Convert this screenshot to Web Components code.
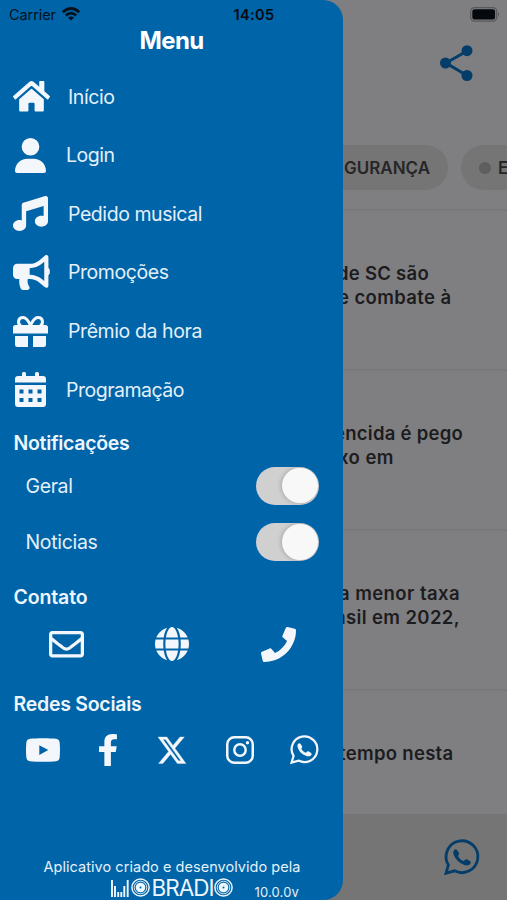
<!DOCTYPE html>
<html lang="pt-BR">
<head>
<meta charset="utf-8">
<title>Menu</title>
<style>
html,body{margin:0;height:900px;overflow:hidden}
body{font-family:Inter,"Liberation Sans",sans-serif;background:#7f7f81}
</style>
</head>
<body>
<radio-app></radio-app>
<script>
const define = (name, html, init) => {
  const t = document.createElement('template');
  t.innerHTML = html;
  customElements.define(name, class extends HTMLElement {
    constructor() {
      super();
      this.attachShadow({mode: 'open'}).append(t.content.cloneNode(true));
    }
    connectedCallback() { if (init) init(this, this.shadowRoot); }
  });
};

const handset = '<g fill="none" stroke="currentColor"><path stroke-width="2.8" stroke-linejoin="miter" d="M2 34.2 4.4 26A15.9 15.9 0 1 1 10.6 31.8Z"/></g><path fill="currentColor" d="M10.2 10.9C11 10 12.4 10 13 10.9L15 14.1C15.6 15.1 14.7 16 14 16.9 14.8 19.1 17 21.2 19.5 22.1L21.2 20.8C21.9 20.2 22.6 20.1 23.4 20.6L26.2 22.3C27.1 22.9 27 24.2 26.2 25 24.7 26.7 22.3 26.8 19.8 25.8 14.9 23.9 11.4 20.3 9.8 16 9 13.9 9.1 12.1 10.2 10.9Z"/>';

/* name: [viewBox, width, height, markup] */
const ICONS = {
  home: ['0 32 576 448', 37, 30.5, '<path d="M280.37 148.26L96 300.11V464a16 16 0 0 0 16 16l112.06-.29a16 16 0 0 0 15.92-16V368a16 16 0 0 1 16-16h64a16 16 0 0 1 16 16v95.64a16 16 0 0 0 16 16.05L464 480a16 16 0 0 0 16-16V300L295.67 148.26a12.19 12.19 0 0 0-15.3 0zM571.6 251.47L488 182.56V44.05a12 12 0 0 0-12-12h-56a12 12 0 0 0-12 12v72.61L318.47 43a48 48 0 0 0-61 0L4.34 251.47a12 12 0 0 0-1.6 16.9l25.5 31A12 12 0 0 0 45.15 301l235.22-193.74a12.19 12.19 0 0 1 15.3 0L530.9 301a12 12 0 0 0 16.9-1.6l25.5-31a12 12 0 0 0-1.7-16.93z"/>'],
  user: ['0 0 448 512', 31, 35, '<path d="M224 256A128 128 0 1 0 224 0a128 128 0 1 0 0 256zm-45.7 48C79.8 304 0 383.8 0 482.3C0 498.7 13.3 512 29.7 512H418.3c16.4 0 29.7-13.3 29.7-29.7C448 383.8 368.2 304 269.7 304H178.3z"/>'],
  music: ['0 0 512 512', 35, 35, '<path d="M499.1 6.3c8.1 6 12.9 15.6 12.9 25.7v72V368c0 44.2-43 80-96 80s-96-35.8-96-80s43-80 96-80c11.2 0 22 1.6 32 4.6V147L192 223.8V432c0 44.2-43 80-96 80s-96-35.8-96-80s43-80 96-80c11.2 0 22 1.6 32 4.6V200 128c0-14.1 9.3-26.6 22.8-30.7l320-96c9.7-2.9 20.2-1.1 28.3 5z"/>'],
  horn: ['0 0 576 512', 37.5, 35, '<path d="M544 184.880V32.01C544 23.26 537.02 0 512 0c-7.12 0-14.19 2.38-19.98 7.02l-85.03 68.03C364.28 109.19 310.66 128 256 128H64c-35.35 0-64 28.65-64 64v96c0 35.35 28.65 64 64 64h33.7c-1.39 10.48-2.18 21.14-2.18 32 0 39.77 9.26 77.35 25.56 110.94 5.19 10.69 16.52 17.06 28.4 17.06h74.28c26.05 0 41.69-29.84 25.9-50.56-16.4-21.52-26.15-48.36-26.15-77.44 0-11.11 1.62-21.79 4.41-32H256c54.66 0 108.28 18.81 150.98 52.95l85.03 68.03a32.023 32.023 0 0 0 19.98 7.02c24.92 0 32-22.78 32-32V295.13C560 284 566 263.63 566 240S560 196 544 184.880zM480 381.42l-33.05-26.44C392.95 311.78 325.12 288 256 288v-96c69.12 0 136.95-23.78 190.95-66.98L480 98.58v282.84z"/>'],
  gift: ['0 0 35 31', 35, 31, '<g fill="none" stroke="currentColor" stroke-width="3"><path d="M17.5 9.5C15 4 13 1.5 10 1.6 4.500 1.800 4.300 8.300 8 9.500M17.500 9.500C20 4 22 1.500 25 1.600 30.500 1.800 30.700 8.300 27 9.500"/></g><path d="M2.500 9H32.500Q35 9 35 11.500V17.500H0V11.500Q0 9 2.500 9ZM2 20H15V31H4.500Q2 31 2 28.500ZM20 20H33V28.500Q33 31 30.500 31H20Z"/>'],
  calendar: ['0 0 31 35', 31, 35, '<path fill-rule="evenodd" d="M7 4V1.500Q7 0 8.500 0H9.500Q11 0 11 1.500V4H20V1.500Q20 0 21.500 0H22.500Q24 0 24 1.500V4H28Q31 4 31 7V10.500H0V7Q0 4 3 4ZM0 13H31V32Q31 35 28 35H3Q0 35 0 32ZM4.500 17.500V21.500H8.500V17.500ZM13.500 17.500V21.500H17.500V17.500ZM22.500 17.500V21.500H26.500V17.500ZM4.500 26V30H8.500V26ZM13.500 26V30H17.500V26ZM22.500 26V30H26.500V26Z"/>'],
  mail: ['0 64 512 384', 35, 26.500, '<path d="M464 64H48C21.49 64 0 85.49 0 112v288c0 26.51 21.49 48 48 48h416c26.51 0 48-21.49 48-48V112c0-26.51-21.49-48-48-48zm0 48v40.805c-22.422 18.259-58.168 46.651-134.587 106.49-16.841 13.247-50.201 45.072-73.413 44.701-23.208.375-56.579-31.459-73.413-44.701C106.18 199.465 70.425 171.067 48 152.805V112h416zM48 400V214.398c22.914 18.251 55.409 43.862 104.938 82.646 21.857 17.205 60.134 55.186 103.062 54.955 42.717.231 80.509-37.199 103.053-54.947 49.528-38.783 82.032-64.401 104.947-82.653V400H48z"/>'],
  globe: ['0 8 496 496', 34, 34, '<path d="M336.5 160C322 70.7 287.8 8 248 8s-74 62.7-88.5 152h177zM152 256c0 22.2 1.2 43.5 3.3 64h185.3c2.1-20.5 3.3-41.8 3.3-64s-1.2-43.5-3.3-64H155.3c-2.1 20.5-3.3 41.8-3.3 64zm324.7-96c-28.6-67.9-86.5-120.4-158-141.6 24.4 33.8 41.2 84.7 50 141.6h108zM177.2 18.4C105.8 39.6 47.8 92.1 19.3 160h108c8.7-56.9 25.5-107.8 49.9-141.6zM487.4 192H372.7c2.1 21 3.3 42.5 3.3 64s-1.2 43-3.3 64h114.6c5.5-20.5 8.6-41.8 8.6-64s-3.1-43.5-8.5-64zM120 256c0-21.5 1.2-43 3.3-64H8.6C3.2 212.5 0 233.8 0 256s3.2 43.5 8.6 64h114.6c-2-21-3.2-42.5-3.2-64zm39.5 96c14.5 89.3 48.7 152 88.5 152s74-62.7 88.5-152h-177zm159.3 141.6c71.4-21.2 129.4-73.7 158-141.6h-108c-8.800 56.900-25.600 107.800-50 141.600zM19.300 352c28.600 67.900 86.500 120.400 158 141.600-24.400-33.800-41.200-84.700-50-141.600h-108z"/>'],
  phone: ['0 0 512 512', 35, 35, '<path d="M493.4 24.6l-104-24c-11.3-2.6-22.9 3.3-27.5 13.9l-48 112c-4.2 9.8-1.4 21.3 6.9 28l60.6 49.6c-36 76.7-98.9 140.5-177.2 177.2l-49.6-60.6c-6.8-8.3-18.2-11.1-28-6.9l-112 48C3.9 366.5-2 378.1.6 389.4l24 104C27.1 504.2 36.7 512 48 512c256.1 0 464-207.5 464-464 0-11.2-7.7-20.9-18.600-23.400z"/>'],
  youtube: ['0 0 34 24', 34, 24, '<path fill-rule="evenodd" d="M4 .8C10 0 24 0 30 .8 32.500 1.200 33.500 2.500 33.700 5 34.100 10 34.100 14 33.700 19 33.500 21.500 32.500 22.800 30 23.200 24 24 10 24 4 23.200 1.500 22.800.5 21.500.3 19-.1 14-.1 10 .3 5 .5 2.500 1.500 1.200 4 .8ZM13.300 7.200V17L22.300 12.100Z"/>'],
  facebook: ['22 0 276 512', 18, 32, '<path d="M279.14 288l14.22-92.660h-88.910v-60.130c0-25.350 12.420-50.060 52.240-50.060h40.420V6.260S260.430 0 225.360 0c-73.220 0-121.080 44.380-121.080 124.720v70.620H22.890V288h81.390v224h100.170V288z"/>'],
  x: ['1.25 2.25 21.6 19.5', 28, 26.500, '<path stroke="currentColor" stroke-width=".25" d="M18.244 2.25h3.308l-7.227 8.26 8.502 11.24H16.17l-5.214-6.817L4.99 21.75H1.68l7.73-8.835L1.254 2.25H8.08l4.713 6.231zm-1.161 17.52h1.833L7.084 4.126H5.117z"/>'],
  instagram: ['0 0 28 28', 28, 28, '<g fill="none" stroke="currentColor" stroke-width="2.5"><rect x="1.25" y="1.25" width="25.500" height="25.500" rx="7"/><circle cx="14" cy="14" r="5.700"/></g><circle cx="21.500" cy="6.700" r="1.700"/>'],
  whatsapp: ['0 0 36 36', 29, 29, handset],
  share: ['0 0 33 36', 33, 36, '<path d="M27 6 6 18 27 30.500" fill="none" stroke="currentColor" stroke-width="3"/><circle cx="5.500" cy="18" r="5.500"/><circle cx="27" cy="5.700" r="5.500"/><circle cx="27" cy="30.500" r="5.500"/>'],
  wifi: ['0 0 18 14', 18, 14, '<g fill="none" stroke="currentColor" stroke-width="2.700"><path d="M.8 5.200Q9-2.200 17.200 5.200M3.900 8.500Q9 3.900 14.100 8.500"/></g><path d="M6 10.600Q9 8.200 12 10.600L9 13.600Z"/>'],
  battery: ['0 0 31 15', 31, 15, '<rect x=".7" y=".7" width="26" height="13.400" rx="3.800" fill="none" stroke="#59595a" stroke-width="1.300"/><rect x="2.300" y="2.300" width="22.800" height="10.200" rx="2.300"/><path fill="#59595a" d="M28 5.200Q30.300 7.400 28 9.600Z"/>']
};

define('app-icon', '<style>:host{display:block;flex:none}svg{display:block;fill:currentColor;overflow:visible}</style>', (el, root) => {
  const [box, w, h, body] = ICONS[el.getAttribute('name')];
  const s = el.getAttribute('size') / w || 1;
  root.innerHTML += `<svg viewBox="${box}" width="${w * s}" height="${h * s}" preserveAspectRatio="none">${body}</svg>`;
});

/* A single line of text tracked to the width given in its attribute. */
define('tracked-text', '<style>:host{display:block;white-space:nowrap;flex:none}span{display:inline-block}</style><span><slot></slot></span>', (el, root) => {
  const span = root.querySelector('span');
  const target = +el.getAttribute('width'), n = el.textContent.length;
  const gap = (target - span.getBoundingClientRect().width) / n;
  span.style.letterSpacing = gap + 'px';
});

define('status-bar', `<style>
:host{position:absolute;inset:0 0 auto 0;height:28px;display:grid;grid-template-columns:1fr auto 1fr;align-items:center;padding:0 6px 0 9px;box-sizing:border-box;color:#05090d}
.l{display:flex;gap:6px;align-items:center;font-size:14.500px;opacity:.9}
b{font-size:14.500px;font-weight:600;margin-right:2px}
.r{justify-self:end}
</style><div class="l"><tracked-text width="47">Carrier</tracked-text><app-icon name="wifi"></app-icon></div><b><tracked-text width="41">14:05</tracked-text></b><app-icon class="r" name="battery"></app-icon>`);

define('category-chip', `<style>
:host{display:flex;align-items:center;box-sizing:border-box;height:45px;border-radius:23px;background:#757575;flex:none;font-size:17px;font-weight:600;color:#262627}
i{display:none;width:12px;height:12px;border-radius:50%;background:#5e5e5f;margin-right:7px}
:host([dot]) i{display:block}
</style><i></i><slot></slot>`);

define('news-item', `<style>
:host{display:flex;flex-direction:column;box-sizing:border-box;height:160px;border-top:2px solid #79797b;padding-top:51px;font-size:18.500px;line-height:23.500px;font-weight:600}
</style><slot></slot>`);

define('news-page', `<style>
:host{display:flex;flex-direction:column;height:900px;color:#1c1c1e;background:#7f7f81;overflow:hidden}
header{height:145px;flex:none;box-sizing:border-box;padding:45px 34.500px 0 0;display:flex;justify-content:flex-end;color:#043d69}
nav{display:flex;gap:13px;height:64px;flex:none;padding-left:310px}
main{height:605px;flex:none;overflow:hidden}
footer{flex:1;background:#757575;display:flex;justify-content:flex-end;padding:24.500px 27.500px 0 0;color:#043d69}
</style>
<header><app-icon name="share"></app-icon></header>
<nav><category-chip style="width:138px;padding-left:34px"><tracked-text width="86">GURANÇA</tracked-text></category-chip>
<category-chip dot style="width:120px;padding-left:18px">E</category-chip></nav>
<main>
<news-item><tracked-text style="margin-left:337px" width="92">de SC são</tracked-text><tracked-text style="margin-left:338px" width="113.500">e combate à</tracked-text></news-item>
<news-item><tracked-text style="margin-left:334px" width="129">encida é pego</tracked-text><tracked-text style="margin-left:338px" width="56">xo em</tracked-text></news-item>
<news-item><tracked-text style="margin-left:339px" width="121">a menor taxa</tracked-text><tracked-text style="margin-left:335px" width="125">asil em 2022,</tracked-text></news-item>
<news-item><tracked-text style="margin-left:339px" width="114.500">tempo nesta</tracked-text></news-item>
</main>
<footer><app-icon name="whatsapp" size="36"></app-icon></footer>`);

customElements.define('menu-item', class extends HTMLElement {
  constructor() {
    super();
    const icon = this.getAttribute('icon'), pad = this.getAttribute('pad') || 13;
    this.attachShadow({mode: 'open'}).innerHTML = `<style>
:host{display:flex;align-items:center;height:58.600px;box-sizing:border-box;font-size:19.500px;color:#e4f0fa}
.i{width:${this.getAttribute('text') - pad}px;padding-left:${pad}px;color:#f3f6fb;flex:none}
</style><div class="i"><app-icon name="${icon}"></app-icon></div><slot></slot>`;
  }
});

define('section-title', `<style>:host{display:flex;align-items:center;height:30px;padding-left:13.500px;font-size:19.500px;font-weight:600;color:#eef6fd}</style><slot></slot>`);

define('toggle-row', `<style>
:host{display:flex;align-items:center;justify-content:space-between;height:56.500px;padding:0 24px 0 25.500px;font-size:19.500px;color:#e4f0fa}
.t{width:63px;height:38px;box-sizing:border-box;border-radius:19px;background:#d0d0d1;display:flex;justify-content:flex-end;align-items:center;padding-right:1.500px;overflow:hidden}
.k{width:35.500px;height:35.500px;border-radius:50%;background:#f8f8f8;box-shadow:-1px 0 4px #0003}
</style><slot></slot><div class="t"><div class="k"></div></div>`);

define('icon-row', `<style>:host{display:flex;justify-content:space-between;align-items:center;box-sizing:border-box;color:#f3f6fb}</style><slot></slot>`);

const disc = '<svg width="19" height="19" viewBox="0 0 19 19"><g fill="none" stroke="currentColor"><circle cx="9.500" cy="9.500" r="8.600" stroke-width="1.500"/><circle cx="9.500" cy="9.500" r="6.300" stroke-width=".9"/><circle cx="9.500" cy="9.500" r="2.900" stroke-width="3.800"/></g></svg>';
define('mobradio-logo', `<style>
:host{display:flex;align-items:center;height:19px;color:#eef6fd}
svg{display:block;flex:none}
svg + svg{margin-left:2px}
span{font:400 22.500px/19px Inter,sans-serif;margin:0 0 0 2px}
</style>
<svg width="18" height="18" viewBox="0 0 18 18"><path stroke="currentColor" stroke-width="1.900" d="M1 1V18M4 7V18M7.200 13V18M10.300 13V18M13.300 7V18M16.700 1V18"/></svg>
${disc}<span><tracked-text width="62">BRADI</tracked-text></span>${disc}`);

define('menu-drawer', `<style>
:host{position:absolute;inset:0 auto 0 0;width:343px;display:flex;flex-direction:column;box-sizing:border-box;background:#0064a8;border-radius:0 20px 20px 0;color:#e4f0fa;overflow:hidden}
h1{margin:0;padding-top:26px;height:41.400px;display:flex;justify-content:center;font-size:24px;line-height:29px;font-weight:700;color:#fff;flex:none}
section-title,toggle-row,menu-item{flex:none}
footer{margin-top:auto;height:43px;flex:none}
.credit{padding-left:43.500px;font-size:14.500px;line-height:20px}
.line{display:flex;padding:1px 0 0 110.500px}
.v{margin-left:22px;padding-top:5px;font-size:13px;line-height:18px}
</style>
<h1><tracked-text width="64">Menu</tracked-text></h1>
<menu-item icon="home" text="68"><tracked-text width="46.500">Início</tracked-text></menu-item>
<menu-item icon="user" pad="15" text="66"><tracked-text width="48.500">Login</tracked-text></menu-item>
<menu-item icon="music" text="68"><tracked-text width="134">Pedido musical</tracked-text></menu-item>
<menu-item icon="horn" text="68"><tracked-text width="100.500">Promoções</tracked-text></menu-item>
<menu-item icon="gift" text="68"><tracked-text width="134">Prêmio da hora</tracked-text></menu-item>
<menu-item icon="calendar" pad="15" text="66"><tracked-text width="118">Programação</tracked-text></menu-item>
<section-title style="margin-top:9px;margin-bottom:-.5px"><tracked-text width="116">Notificações</tracked-text></section-title>
<toggle-row><tracked-text width="47">Geral</tracked-text></toggle-row>
<toggle-row><tracked-text width="72">Noticias</tracked-text></toggle-row>
<section-title style="margin-top:11.500px"><tracked-text width="74">Contato</tracked-text></section-title>
<icon-row style="height:65px;margin-bottom:-1px;flex:none;padding:0 47.500px 0 48.500px"><app-icon name="mail"></app-icon><app-icon name="globe"></app-icon><app-icon name="phone"></app-icon></icon-row>
<section-title style="margin-top:13px"><tracked-text width="128">Redes Sociais</tracked-text></section-title>
<icon-row style="height:62px;flex:none;padding:0 24px 0 26px"><app-icon name="youtube"></app-icon><app-icon name="facebook"></app-icon><app-icon name="x" style="margin:0 1px 0 2px"></app-icon><app-icon name="instagram" style="margin-right:-3px"></app-icon><app-icon name="whatsapp"></app-icon></icon-row>
<footer><div class="credit"><tracked-text width="257">Aplicativo criado e desenvolvido pela</tracked-text></div>
<div class="line"><mobradio-logo></mobradio-logo><tracked-text class="v" width="44.500">10.0.0v</tracked-text></div></footer>`);

define('radio-app', `<style>:host{display:block;position:relative;width:507px;height:900px;overflow:hidden}</style>
<news-page></news-page><menu-drawer></menu-drawer><status-bar></status-bar>`);
</script>
</body>
</html>
